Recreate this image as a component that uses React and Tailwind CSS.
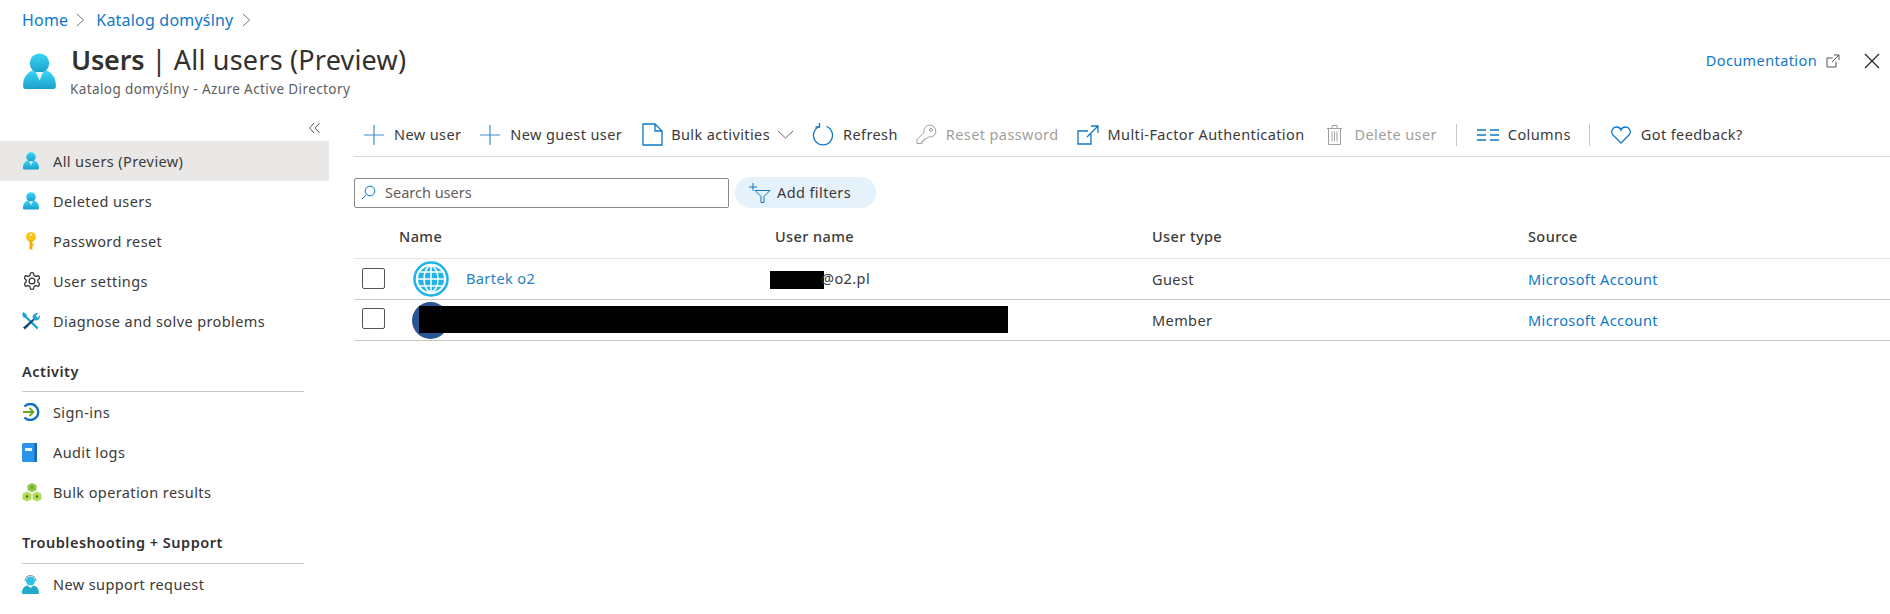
import React from "react";

const S = ({ w = 20, h = 20, vb = "0 0 20 20", children, className = "" }) => (
  <svg width={w} height={h} viewBox={vb} className={"shrink-0 " + className} fill="none">{children}</svg>
);

const Person = ({ w = 18, h = 18 }) => (
  <S w={w} h={h} vb="0 0 32 36">
    <defs>
      <linearGradient id="pg" x1="0" y1="0" x2="0" y2="1">
        <stop offset="0" stopColor="#38d6f7" />
        <stop offset="1" stopColor="#1c9fca" />
      </linearGradient>
    </defs>
    <circle cx="16" cy="10" r="9.500" fill="url(#pg)" />
    <path d="M0 32c0-9 5-14 10-15l6 5 6-5c5 1 10 6 10 15 0 2-1 3-3 3H3c-2 0-3-1-3-3z" fill="url(#pg)" />
    <path d="M12.500 18.500h7L16 27z" fill="#e6f7fb" />
  </S>
);

const Key = () => (
  <S w={18} h={20} vb="0 0 18 20">
    <circle cx="9" cy="6" r="5" fill="#fcc419" />
    <rect x="7.500" y="9" width="3" height="9.500" fill="#f5ac0f" />
    <rect x="10" y="13" width="1.800" height="1.500" fill="#f5ac0f" />
    <circle cx="9" cy="3.800" r="1.200" fill="#fff2c4" />
  </S>
);

const Gear = () => (
  <S w={20} h={20} vb="0 0 24 24">
    <path d="M12.220 2h-.44a2 2 0 0 0-2 2v.18a2 2 0 0 1-1 1.730l-.43.250a2 2 0 0 1-2 0l-.150-.080a2 2 0 0 0-2.730.730l-.220.380a2 2 0 0 0 .730 2.730l.150.100a2 2 0 0 1 1 1.720v.510a2 2 0 0 1-1 1.740l-.150.090a2 2 0 0 0-.730 2.730l.220.380a2 2 0 0 0 2.730.730l.150-.080a2 2 0 0 1 2 0l.430.250a2 2 0 0 1 1 1.730V20a2 2 0 0 0 2 2h.44a2 2 0 0 0 2-2v-.180a2 2 0 0 1 1-1.730l.430-.250a2 2 0 0 1 2 0l.150.080a2 2 0 0 0 2.730-.730l.220-.390a2 2 0 0 0-.730-2.730l-.150-.080a2 2 0 0 1-1-1.740v-.500a2 2 0 0 1 1-1.740l.150-.090a2 2 0 0 0 .730-2.730l-.220-.380a2 2 0 0 0-2.730-.730l-.150.080a2 2 0 0 1-2 0l-.430-.250a2 2 0 0 1-1-1.730V4a2 2 0 0 0-2-2z" stroke="#333" strokeWidth="1.500" />
    <circle cx="12" cy="12" r="3.500" stroke="#333" strokeWidth="1.500" />
  </S>
);

const Tools = () => (
  <S w={18} h={18} vb="0 0 18 18">
    <path d="M1.500 0l3 2.500.5 2L16.500 15.500 15 17.500 3.500 6 1.500 5.500 0 2z" fill="#1da3d6" />
    <path d="M11.500 6.500L1 15.500l2 2L12.500 8z" fill="#134a6e" />
    <path d="M10.500 5.500C10.500 3 13 .5 16.500 1L14 3.500l.5 1.500 1.500.5L18 3c.5 3-1.500 6-5 5.500z" fill="#1da3d6" />
  </S>
);

const SignIn = () => (
  <S w={18} h={18} vb="0 0 18 18">
    <path d="M2.500 3.500A8 8 0 1 1 2.500 14.500" stroke="#1170c0" strokeWidth="2.400" />
    <path d="M1 9h10M7.500 5l4 4-4 4" stroke="#6aa81f" strokeWidth="1.800" />
  </S>
);

const Book = () => (
  <S w={16} h={19} vb="0 0 16 19">
    <rect width="15" height="19" rx="1.500" fill="#2c93ea" />
    <rect x="12.500" width="2.500" height="19" fill="#1169b5" />
    <rect x="3" y="5" width="7" height="3" fill="#e8f3fc" />
  </S>
);

const Cubes = () => (
  <S w={20} h={19} vb="0 0 20 19">
    <path d="M10 0l4.500 2.300v4.700L10 9.300 5.500 7V2.300z" fill="#8cc63f" />
    <path d="M5 8.500l4.500 2.300v5.500L5 18.600.5 16.300v-5.500z" fill="#b4dc5c" />
    <path d="M15 8.500l4.500 2.300v5.500L15 18.600l-4.500-2.300v-5.500z" fill="#b4dc5c" />
    <circle cx="5" cy="13.500" r="1.300" fill="#3f7c16" />
    <circle cx="15" cy="13.500" r="1.300" fill="#3f7c16" />
    <circle cx="10" cy="4.500" r="1.200" fill="#5f9a1f" />
  </S>
);

const Support = () => (
  <S w={17} h={20} vb="0 0 17 20">
    <path d="M3 7a5.500 5.500 0 0 1 11 0" stroke="#888" strokeWidth="1" />
    <circle cx="8.500" cy="7" r="4.500" fill="#2cc3e6" />
    <path d="M0 19c0-5 3-7 5.500-7.500L8.500 14l3-2.500C14 12 17 14 17 19c0 .5-.5 1-1 1H1c-.5 0-1-.5-1-1z" fill="#22aacb" />
  </S>
);

const Item = ({ icon, label, active }) => (
  <div className={"flex h-10 items-center " + (active ? "bg-[#e9e8e7]" : "")}>
    <div className="flex w-[53px] shrink-0 justify-start pl-[22px]">{icon}</div>
    <span className="pt-[2px] text-[14.500px] text-[#3b3a39]">{label}</span>
  </div>
);

const Section = ({ title, className }) => (
  <div className={"ml-[22px] mr-[25px] border-b border-[#c8c6c4] " + className}>
    <div className="text-[14.500px] leading-[20px] font-semibold tracking-[0.5px] text-[#323130]">{title}</div>
  </div>
);

const B = "#0f78c8";

const Tool = ({ icon, label, disabled, className = "", after }) => (
  <div className={"flex items-center " + className}>
    {icon}
    <span className={"text-[14.500px] " + (disabled ? "text-[#a19f9d]" : "text-[#3b3a39]")}>{label}</span>
    {after}
  </div>
);

const Plus = () => (
  <S w={20} h={20} className="mr-[10px]">
    <path d="M10 0v20M0 10h20" stroke="#3f8fcf" strokeWidth="1.200" />
  </S>
);

const Divider = () => <div className="h-[22px] w-px bg-[#c8c6c4]" />;

export default function App() {
  return (
    <div className="relative h-[614px] w-[1890px] overflow-hidden bg-white font-['Noto_Sans','Open_Sans',sans-serif] tracking-[0.4px] text-[#323130]">
      <header className="h-[115px]">
        <div className="flex h-10 items-center pl-[22px] text-[16px] tracking-[0.2px] text-[#0f78c8]">
          <span>Home</span>
          <svg width="9" height="14" viewBox="0 0 9 14" fill="none" className="ml-[8px] mr-[11px]"><path d="M1 1l6.500 6L1 13" stroke="#777" /></svg>
          <span>Katalog domyślny</span>
          <svg width="9" height="14" viewBox="0 0 9 14" fill="none" className="ml-[9px]"><path d="M1 1l6.500 6L1 13" stroke="#777" /></svg>
        </div>
        <div className="flex items-start pl-[23px] pr-[10px]">
          <div className="mt-[13px] w-[47px]"><Person w={33} h={37} /></div>
          <div className="flex-1">
            <div className="pl-px text-[27px] leading-[40px] tracking-[0.2px] text-[#323130]"><span className="font-semibold tracking-[-0.2px]">Users</span> | All users (Preview)</div>
            <div className="text-[13.500px] leading-[18px] text-[#605e5c]">Katalog domyślny - Azure Active Directory</div>
          </div>
          <div className="mt-[10px] flex items-center text-[14.500px] text-[#0f78c8]">
            <span>Documentation</span>
            <svg width="14" height="14" viewBox="0 0 14 14" fill="none" className="ml-[9px]"><path d="M10 7.500V13H1V4h5.500M8 1h5v5M13 1L6 8" stroke="#555" /></svg>
            <svg width="16" height="16" viewBox="0 0 16 16" fill="none" className="ml-[24px]"><path d="M1 1l14 14M15 1L1 15" stroke="#222" strokeWidth="1.200" /></svg>
          </div>
        </div>
      </header>

      <div className="flex">
        <aside className="w-[329px] shrink-0">
          <div className="flex h-[26px] items-center justify-end pr-[9px]">
            <svg width="11" height="10" viewBox="0 0 11 10" fill="none"><path d="M5 0L.7 5 5 10M10.500 0L6 5l4.500 5" stroke="#555" /></svg>
          </div>
          <Item active icon={<Person />} label="All users (Preview)" />
          <Item icon={<Person />} label="Deleted users" />
          <Item icon={<Key />} label="Password reset" />
          <Item icon={<Gear />} label="User settings" />
          <Item icon={<Tools />} label="Diagnose and solve problems" />
          <Section title="Activity" className="mt-[20px] pb-[10px]" />
          <Item icon={<SignIn />} label="Sign-ins" />
          <Item icon={<Book />} label="Audit logs" />
          <Item icon={<Cubes />} label="Bulk operation results" />
          <Section title="Troubleshooting + Support" className="mt-[20px] pb-[11px]" />
          <Item icon={<Support />} label="New support request" />
        </aside>

        <main className="ml-[25px] flex-1">
          <div className="flex h-[42px] items-center border-b border-[#d6d6d6] pl-[10px] pb-[2px]">
            <Tool icon={<Plus />} label="New user" />
            <Tool icon={<Plus />} label="New guest user" className="ml-[19px]" />
            <Tool className="ml-[20px]" label="Bulk activities" icon={
              <S w={21} h={23} vb="0 0 21 23" className="mr-[8px]"><path d="M1 1h12l7 7v14H1zM13 1v7h7" stroke={B} strokeWidth="1.300" /></S>
            } after={
              <svg width="17" height="9" viewBox="0 0 17 9" fill="none" className="ml-[7px]"><path d="M1 1l7.500 7L16 1" stroke="#666" /></svg>
            } />
            <Tool className="ml-[18px]" label="Refresh" icon={
              <S w={22} h={23} vb="0 0 22 23" className="mr-[9px]"><path d="M14.500 3.500a9.500 9.500 0 1 1-7 0" stroke={B} strokeWidth="1.300" /><path d="M7.500 0v4H3.500" stroke={B} strokeWidth="1.300" /></S>
            } />
            <Tool className="ml-[18px]" disabled label="Reset password" icon={
              <S w={21} h={21} vb="0 0 21 21" className="mr-[9px]"><path d="M8 8.500a6 6 0 1 1 4.500 4.500L10 15H8v2H6v2.500H1v-4z" stroke="#a19f9d" /><circle cx="15" cy="6" r="1.500" stroke="#a19f9d" /></S>
            } />
            <Tool className="ml-[19px]" label="Multi-Factor Authentication" icon={
              <S w={22} h={20} vb="0 0 22 20" className="mr-[8px]"><path d="M14 9v10H1V6h10M14 1h7v7M21 1L10 12" stroke={B} strokeWidth="1.300" /></S>
            } />
            <Tool className="ml-[22px]" disabled label="Delete user" icon={
              <S w={15} h={20} vb="0 0 15 20" className="mr-[13px]"><path d="M0 3.500h15M5 3.500V.500h5v3M1.500 3.500v16h12v-16M5 6.500v10M7.500 6.500v10M10 6.500v10" stroke="#a19f9d" /></S>
            } />
            <div className="ml-[19px]"><Divider /></div>
            <Tool className="ml-[20px]" label="Columns" icon={
              <S w={22} h={12} vb="0 0 22 12" className="mr-[9px]"><path d="M0 1h9M0 6h9M0 11h9M13 1h9M13 6h9M13 11h9" stroke={B} strokeWidth="1.300" /></S>
            } />
            <div className="ml-[18px]"><Divider /></div>
            <Tool className="ml-[21px]" label="Got feedback?" icon={
              <S w={20} h={18} vb="0 0 20 18" className="mr-[10px]"><path d="M10 17L2 9C-1 5 2 1 5.500 1 8 1 9.500 2.500 10 4c.5-1.500 2-3 4.500-3C18 1 21 5 18 9z" stroke={B} strokeWidth="1.300" /></S>
            } />
          </div>

          <div className="mt-[20px] flex items-center">
            <div className="flex h-[30px] w-[375px] items-center rounded-[2px] border border-[#8a8886] pl-[6px]">
              <svg width="15" height="15" viewBox="0 0 15 15" fill="none" className="mr-[9px]"><circle cx="9" cy="6" r="4.800" stroke={B} /><path d="M5.500 9.500L1 14" stroke={B} /></svg>
              <span className="text-[14.500px] tracking-normal text-[#605e5c]">Search users</span>
            </div>
            <div className="ml-[6px] flex h-[31px] w-[141px] items-center rounded-full bg-[#e5f1fb] pl-[13px]">
              <svg width="24" height="20" viewBox="0 0 24 20" fill="none" className="mr-[5px]"><path d="M1 4h8M5 0v8" stroke={B} /><path d="M7 7.500h15l-6 6v6h-3v-6z" stroke={B} /></svg>
              <span className="text-[14.500px] text-[#3b3a39]">Add filters</span>
            </div>
          </div>

          <div className="mt-[14px] grid h-[37px] grid-cols-[376px_377px_376px_1fr] items-center border-b border-[#e4e4e4] pb-[6px] pl-[45px] text-[14.500px] font-medium text-[#3b3a39]">
            <div>Name</div><div>User name</div><div>User type</div><div>Source</div>
          </div>

          <div className="grid h-[41px] grid-cols-[421px_377px_376px_1fr] items-center border-b border-[#c8c8c8] text-[14.500px]">
            <div className="flex items-center pl-[8px]">
              <div className="mb-[2px] h-[21px] w-[23px] rounded-[2px] border border-[#555]" />
              <svg width="36" height="36" viewBox="0 0 36 36" fill="none" className="ml-[28px]">
                <circle cx="18" cy="18" r="16.500" stroke="#1fb3e8" strokeWidth="2.500" />
                <circle cx="18" cy="18" r="13" fill="#1fb3e8" />
                <path d="M5 18h26M18 5v26M7 11h22M7 25h22" stroke="#fff" strokeWidth="1.500" />
                <ellipse cx="18" cy="18" rx="7" ry="13" stroke="#fff" strokeWidth="1.500" />
              </svg>
              <span className="ml-[17px] text-[#2a7fc1]">Bartek o2</span>
            </div>
            <div className="text-[#3b3a39]"><span className="ml-[-5px] inline-block h-[18px] w-[54px] bg-black align-middle" /><span className="ml-[-3px]">@o2.pl</span></div>
            <div className="pt-[2px] text-[#3b3a39]">Guest</div>
            <div className="pt-[2px] text-[#0f78c8]">Microsoft Account</div>
          </div>

          <div className="relative grid h-[41px] grid-cols-[421px_377px_376px_1fr] items-center border-b border-[#c8c8c8] text-[14.500px]">
            <div className="flex items-center pl-[8px]">
              <div className="mb-[3px] h-[21px] w-[23px] rounded-[2px] border border-[#555]" />
              <div className="ml-[27px] h-[37px] w-[37px] rounded-full bg-[#2a5592]" />
            </div>
            <div />
            <div className="pt-[2px] text-[#3b3a39]">Member</div>
            <div className="pt-[2px] text-[#0f78c8]">Microsoft Account</div>
            <div className="absolute left-[65px] top-[6px] h-[27px] w-[589px] bg-black" />
          </div>
        </main>
      </div>
    </div>
  );
}
